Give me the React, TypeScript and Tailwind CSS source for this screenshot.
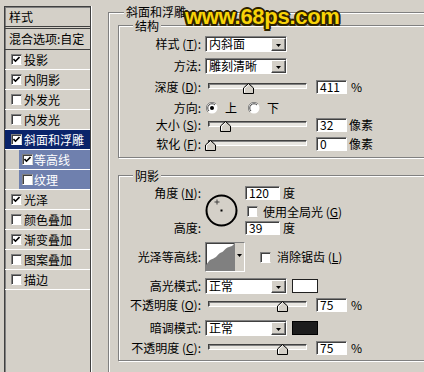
import clsx from "clsx";

const styleItems = [
    { label: "投影", on: true },
    { label: "内阴影", on: true },
    { label: "外发光", on: false },
    { label: "内发光", on: false },
    { label: "斜面和浮雕", on: true, state: "active" },
    { label: "等高线", on: true, state: "sub" },
    { label: "纹理", on: false, state: "sub" },
    { label: "光泽", on: true },
    { label: "颜色叠加", on: false },
    { label: "渐变叠加", on: true },
    { label: "图案叠加", on: false },
    { label: "描边", on: false },
];

function Check({ on }: { on: boolean }) {
    return (
        <span className="w-[11px] h-[11px] shrink-0 bg-white border border-t-[#808080] border-l-[#808080] border-b-white border-r-[#d4d0c8] shadow-[inset_1px_1px_0_#404040] flex items-center justify-center">
            {on && (
                <svg width="7" height="7" viewBox="0 0 7 7">
                    <path d="M0.5 3 L2.5 5.2 L6.5 1" stroke="#000" strokeWidth="1.6" fill="none" />
                </svg>
            )}
        </span>
    );
}

function Radio({ on }: { on: boolean }) {
    return (
        <svg width="12" height="12" viewBox="0 0 12 12" className="shrink-0">
            <circle cx="6" cy="6" r="5.5" fill="#fff" />
            <path d="M10 2 A5.5 5.5 0 0 0 2 10" stroke="#808080" fill="none" />
            <path d="M9 3 A4.2 4.2 0 0 0 3 9" stroke="#404040" fill="none" />
            {on && <circle cx="6" cy="6" r="2" fill="#000" />}
        </svg>
    );
}

function Label({ text, k, className }: { text: string; k?: string; className?: string }) {
    return (
        <span className={clsx("w-[82px] shrink-0 text-right leading-none whitespace-nowrap", className)}>
            {text}
            {k && (
                <>
                    {" "}(<span className="underline">{k}</span>)
                </>
            )}
            :
        </span>
    );
}

function Field({ value, className }: { value: string; className?: string }) {
    return (
        <div
            className={clsx(
                "h-[14px] bg-white border border-t-[#808080] border-l-[#808080] border-b-white border-r-white shadow-[inset_1px_1px_0_#404040] flex items-center pl-[3px] leading-none",
                className
            )}
        >
            {value}
        </div>
    );
}

function Select({ value }: { value: string }) {
    return (
        <div className="ml-[4px] w-[82px] h-[16px] shrink-0 bg-white border border-t-[#808080] border-l-[#808080] border-b-white border-r-white shadow-[inset_1px_1px_0_#404040] flex items-center">
            <span className="flex-1 pl-[3px] leading-none">{value}</span>
            <span className="w-[15px] h-[13px] mt-px bg-[#d4d0c8] border border-t-white border-l-white border-b-[#404040] border-r-[#404040] shadow-[inset_-1px_-1px_0_#808080] flex items-center justify-center">
                <svg width="5" height="3" viewBox="0 0 5 3" className="mt-[2px]">
                    <path d="M0 0 H5 L2.5 3 Z" fill="#000" />
                </svg>
            </span>
        </div>
    );
}

function Slider({ pos }: { pos: number }) {
    return (
        <div className="relative ml-[4px] w-[110px] h-[14px] shrink-0">
            <div className="ml-[3px] mt-[3px] w-[99px] h-[6px] border border-t-[#404040] border-l-[#404040] border-b-white border-r-white bg-[#e8e6e1] shadow-[inset_1px_1px_0_#808080]" />
            <svg width="11" height="11" viewBox="0 0 11 11" className="absolute top-[3px]" style={{ left: pos }}>
                <path d="M0.5 10.5 V5 L5.5 0.5 L10.5 5 V10.5 Z" fill="#d4d0c8" stroke="#000" />
                <path d="M1.5 9.5 V5.4 L5.5 1.9" stroke="#fff" fill="none" />
            </svg>
        </div>
    );
}

function Group({ title, className, children }: { title: string; className?: string; children: React.ReactNode }) {
    return (
        <div className={clsx("relative shrink-0 border border-[#808080] shadow-[inset_1px_1px_0_#fff,1px_1px_0_#fff] flex flex-col", className)}>
            <span className="absolute -top-[6px] left-[14px] bg-[#d4d0c8] px-[2px] leading-[12px]">{title}</span>
            {children}
        </div>
    );
}

export default function App() {
    return (
        <div className="relative w-[424px] h-[372px] overflow-hidden bg-[#d4d0c8] flex items-start text-[12px] text-black font-['Noto_Sans_CJK_SC','Noto_Sans',sans-serif]">
            {/* style list */}
            <div className="ml-[4px] mt-[6px] w-[87px] h-[370px] shrink-0 border border-b-0 border-[#404040] shadow-[inset_1px_1px_0_#808080,1px_0_0_#fff] flex flex-col">
                <div className="h-[20px] border-b border-[#404040] flex items-center pl-[4px] leading-none">样式</div>
                <div className="mt-px h-[22px] border-y border-[#404040] flex items-center pl-[4px] leading-none whitespace-nowrap">
                    混合选项:自定
                </div>
                {styleItems.map((item) => (
                    <div
                        key={item.label}
                        className={clsx(
                            "h-[20px] border-b border-white flex items-stretch",
                            item.state === "active" && "bg-[#0a246a] text-white",
                            item.state === "sub" && "pl-[14px]"
                        )}
                    >
                        <div
                            className={clsx(
                                "flex-1 flex items-center leading-none",
                                item.state === "sub" ? "bg-[#6f80ae] text-white pl-[3px] gap-[1px]" : "pl-[6px] gap-[2px]"
                            )}
                        >
                            <Check on={item.on} />
                            <span>{item.label}</span>
                        </div>
                    </div>
                ))}
            </div>

            {/* bevel and emboss */}
            <div className="relative ml-[17px] mt-[12px] w-[340px] h-[380px] shrink-0 border-t border-l border-[#808080] shadow-[inset_1px_1px_0_#fff] pl-[9px] pt-[12px] flex flex-col">
                <span className="absolute -top-[7px] left-[15px] bg-[#d4d0c8] px-[2px] leading-[12px]">斜面和浮雕</span>

                <Group title="结构" className="w-[322px] h-[133px]">
                    <div className="mt-[10px] h-[16px] flex items-center">
                        <Label text="样式" k="T" />
                        <Select value="内斜面" />
                    </div>
                    <div className="mt-[6px] h-[16px] flex items-center">
                        <Label text="方法" />
                        <Select value="雕刻清晰" />
                    </div>
                    <div className="mt-[5px] h-[16px] flex items-center">
                        <Label text="深度" k="D" />
                        <Slider pos={38} />
                        <Field value="411" className="ml-[1px] w-[31px]" />
                        <span className="ml-[4px] leading-none">%</span>
                    </div>
                    <div className="mt-[5px] h-[16px] flex items-center">
                        <Label text="方向" />
                        <span className="ml-[5px]">
                            <Radio on />
                        </span>
                        <span className="ml-[7px] leading-none">上</span>
                        <span className="ml-[11px]">
                            <Radio on={false} />
                        </span>
                        <span className="ml-[7px] leading-none">下</span>
                    </div>
                    <div className="mt-[1px] h-[16px] flex items-center">
                        <Label text="大小" k="S" />
                        <Slider pos={15} />
                        <Field value="32" className="ml-[1px] w-[31px]" />
                        <span className="ml-[2px] leading-none">像素</span>
                    </div>
                    <div className="mt-[3px] h-[16px] flex items-center">
                        <Label text="软化" k="F" />
                        <Slider pos={0} />
                        <Field value="0" className="ml-[1px] w-[31px]" />
                        <span className="ml-[2px] leading-none">像素</span>
                    </div>
                </Group>

                <Group title="阴影" className="mt-[17px] w-[322px] h-[186px]">
                    <div className="mt-[10px] h-[48px] flex items-start">
                        <div className="w-[82px] h-[48px] flex flex-col justify-between">
                            <div className="h-[13px] flex items-center">
                                <Label text="角度" k="N" />
                            </div>
                            <div className="h-[13px] flex items-center">
                                <Label text="高度" />
                            </div>
                        </div>
                        <svg width="33" height="33" viewBox="0 0 33 33" className="ml-[4px] mt-[8px] shrink-0">
                            <circle cx="16.5" cy="16.5" r="15" stroke="#000" strokeWidth="2" fill="none" />
                            <rect x="15.5" y="15.5" width="2" height="2" fill="#000" />
                            <path d="M12 5.5 V10.5 M9.5 8 H14.5" stroke="#404040" strokeWidth="1" />
                        </svg>
                        <div className="ml-[7px] flex flex-col">
                            <div className="h-[13px] flex items-center">
                                <Field value="120" className="w-[35px] h-[13px]" />
                                <span className="ml-[3px] leading-none">度</span>
                            </div>
                            <div className="mt-[7px] h-[11px] flex items-center">
                                <span className="ml-[2px]">
                                    <Check on={false} />
                                </span>
                                <span className="ml-[5px] leading-none">
                                    使用全局光 (<span className="underline">G</span>)
                                </span>
                            </div>
                            <div className="mt-[4px] h-[13px] flex items-center">
                                <Field value="39" className="w-[35px] h-[13px]" />
                                <span className="ml-[3px] leading-none">度</span>
                            </div>
                        </div>
                    </div>

                    <div className="mt-[8px] h-[30px] flex items-center">
                        <Label text="光泽等高线" />
                        <div className="ml-[4px] w-[40px] h-[30px] shrink-0 bg-white border border-t-[#808080] border-l-[#808080] border-b-white border-r-white shadow-[inset_1px_1px_0_#404040] flex">
                            <svg width="28" height="28" viewBox="0 0 28 28" className="shrink-0">
                                <path
                                    d="M0 28 L0 22 C2 20 3 17 5 16.5 C7 16 8 15 10 14 C12 12 13 10 15 9.5 C17 9 18 7 20 5.5 C22 4 24 3.5 26 3 L28 1 L28 28 Z"
                                    fill="#808080"
                                />
                            </svg>
                            <div className="flex-1 bg-[#d4d0c8] border-l border-[#808080] flex items-start justify-center pt-[11px]">
                                <svg width="5" height="3" viewBox="0 0 5 3">
                                    <path d="M0 0 H5 L2.5 3 Z" fill="#000" />
                                </svg>
                            </div>
                        </div>
                        <span className="ml-[15px]">
                            <Check on={false} />
                        </span>
                        <span className="ml-[6px] leading-none">
                            消除锯齿 (<span className="underline">L</span>)
                        </span>
                    </div>

                    <div className="mt-[6px] h-[16px] flex items-center">
                        <Label text="高光模式" />
                        <Select value="正常" />
                        <span className="ml-[5px] w-[26px] h-[14px] bg-white border border-[#202020]" />
                    </div>
                    <div className="mt-[4px] h-[14px] flex items-center">
                        <Label text="不透明度" k="O" />
                        <Slider pos={72} />
                        <Field value="75" className="ml-[1px] w-[31px]" />
                        <span className="ml-[4px] leading-none">%</span>
                    </div>
                    <div className="mt-[8px] h-[16px] flex items-center">
                        <Label text="暗调模式" />
                        <Select value="正常" />
                        <span className="ml-[5px] w-[26px] h-[14px] bg-[#1c1c1c] border border-[#000]" />
                    </div>
                    <div className="mt-[5px] h-[14px] flex items-center">
                        <Label text="不透明度" k="C" />
                        <Slider pos={72} />
                        <Field value="75" className="ml-[1px] w-[31px]" />
                        <span className="ml-[4px] leading-none">%</span>
                    </div>
                </Group>
            </div>

            {/* watermark */}
            <span className="absolute left-[185px] top-[6px] font-['Liberation_Sans',Arial,sans-serif] font-bold text-[22px] leading-[22px] tracking-[-0.3px] text-[#f8d408] [text-shadow:2px_0_#2d2200,-2px_0_#2d2200,0_2px_#2d2200,0_-2px_#2d2200,1.5px_1.5px_#2d2200,-1.5px_1.5px_#2d2200,1.5px_-1.5px_#2d2200,-1.5px_-1.5px_#2d2200]">
                www.68ps.com
            </span>
        </div>
    );
}
